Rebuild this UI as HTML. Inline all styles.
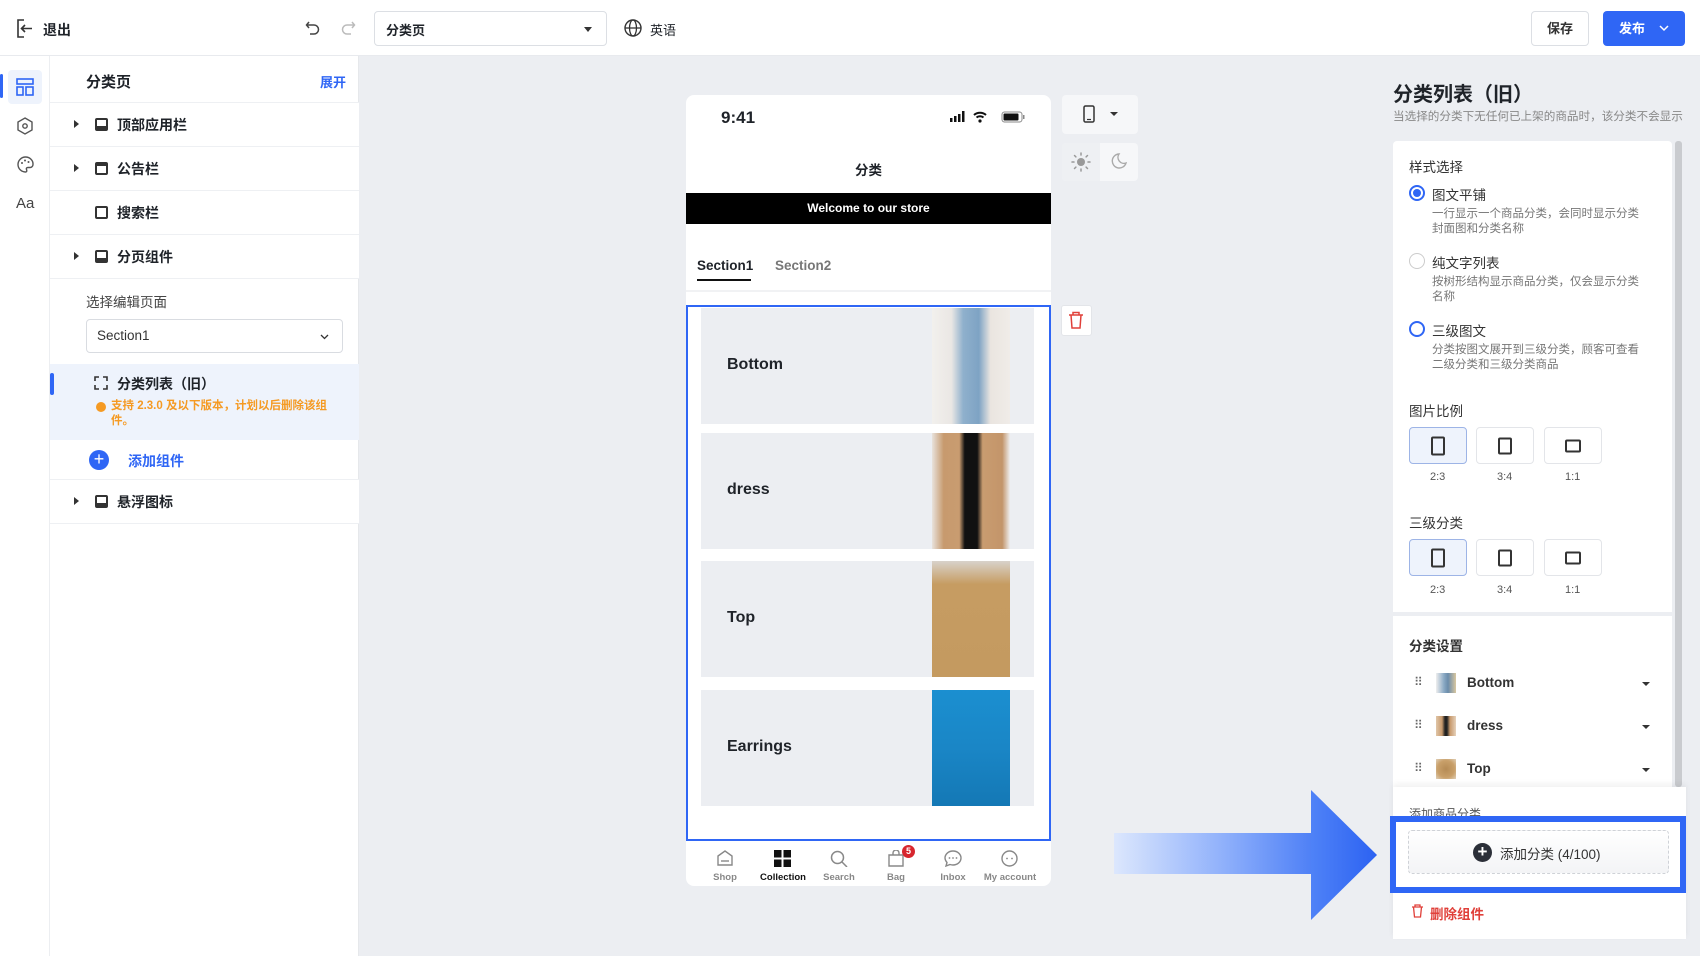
<!DOCTYPE html>
<html><head><meta charset="utf-8"><style>
*{box-sizing:border-box;margin:0;padding:0}
body{width:1700px;height:956px;overflow:hidden;background:#eceef2;font-family:"Liberation Sans","Noto Sans CJK SC",sans-serif;color:#1f2329;position:relative}
.a{position:absolute}
.t{position:absolute;white-space:nowrap}
.row{position:absolute;left:50px;width:309px;height:44px;border-bottom:1px solid #eef0f3;background:#fff}
.row .car{position:absolute;left:24px;top:17px;width:0;height:0;border-top:4px solid transparent;border-bottom:4px solid transparent;border-left:5px solid #333}
.row .ic{position:absolute;left:45px;top:15px;width:13px;height:13px;border:2px solid #333;border-radius:2px}
.row .tx{position:absolute;left:67px;top:12px;font-size:14px;font-weight:bold;color:#1f2329}
.card{position:absolute;left:701px;width:333px;height:116px;background:#eceef2}
.card .n{position:absolute;left:26px;top:48px;font-size:16px;font-weight:bold}
.card .im{position:absolute;left:231px;top:0;width:78px;height:116px}
.rb{position:absolute;width:58px;height:37px;border:1px solid #e3e5e9;border-radius:4px;background:#fff}
.rb.s{background:#eef3fc;border-color:#9db4e6}
.rb i{position:absolute;left:50%;top:50%;border:2px solid #333;border-radius:2px;transform:translate(-50%,-50%)}
.rl{position:absolute;font-size:11px;color:#555}
.desc{position:absolute;left:1432px;font-size:11.5px;color:#777;line-height:15px}
.radio{position:absolute;left:1409px;width:16px;height:16px;border-radius:50%;border:2px solid #2f66f5}
.nav{position:absolute;top:872px;font-size:9.5px;font-weight:bold;color:#888;text-align:center;width:50px}
</style></head><body>
<div class="a" style="left:0;top:0;width:1700px;height:56px;background:#fff;border-bottom:1px solid #e8eaee"></div>
<svg class="a" style="left:16px;top:19px" width="18" height="19" viewBox="0 0 18 19"><path d="M8 1H2v17h6" fill="none" stroke="#333" stroke-width="1.6"/><path d="M16 9.5H6M9 6l-3.5 3.5L9 13" fill="none" stroke="#333" stroke-width="1.6"/></svg>
<div class="t" style="left:43px;top:20px;font-size:14px;font-weight:bold">退出</div>
<svg class="a" style="left:305px;top:20px" width="16" height="16" viewBox="0 0 16 16"><path d="M4 2L1.5 5 4 8M2 5h7a4.5 4.5 0 010 9H5" fill="none" stroke="#444" stroke-width="1.5"/></svg>
<svg class="a" style="left:340px;top:20px" width="16" height="16" viewBox="0 0 16 16"><path d="M12 2l2.5 3L12 8M14 5H7a4.5 4.5 0 000 9h4" fill="none" stroke="#bbb" stroke-width="1.5"/></svg>
<div class="a" style="left:374px;top:11px;width:233px;height:35px;border:1px solid #dcdfe4;border-radius:4px"></div>
<div class="t" style="left:386px;top:20px;font-size:13px;font-weight:bold">分类页</div>
<div class="a" style="left:584px;top:27px;border-left:4px solid transparent;border-right:4px solid transparent;border-top:5px solid #333"></div>
<svg class="a" style="left:624px;top:19px" width="18" height="18" viewBox="0 0 18 18"><circle cx="9" cy="9" r="8" fill="none" stroke="#333" stroke-width="1.4"/><ellipse cx="9" cy="9" rx="3.5" ry="8" fill="none" stroke="#333" stroke-width="1.3"/><path d="M1 9h16" stroke="#333" stroke-width="1.3"/></svg>
<div class="t" style="left:650px;top:20px;font-size:13px">英语</div>
<div class="a" style="left:1531px;top:11px;width:58px;height:35px;border:1px solid #dcdfe4;border-radius:4px;font-size:13px;font-weight:bold;text-align:center;line-height:33px;color:#333">保存</div>
<div class="a" style="left:1603px;top:11px;width:82px;height:35px;background:#2f66f5;border-radius:4px;color:#fff;font-size:13px;font-weight:bold;line-height:35px;padding-left:16px">发布<svg style="position:absolute;left:56px;top:14px" width="10" height="7" viewBox="0 0 10 7"><path d="M1 1l4 4 4-4" fill="none" stroke="#fff" stroke-width="1.5"/></svg></div>

<div class="a" style="left:0;top:56px;width:50px;height:900px;background:#fff;border-right:1px solid #eceef1"></div>
<div class="a" style="left:0;top:74px;width:3px;height:24px;background:#2f66f5;border-radius:2px"></div>
<div class="a" style="left:8px;top:70px;width:34px;height:34px;background:#eef3fc;border-radius:4px"></div>
<svg class="a" style="left:16px;top:78px" width="18" height="18" viewBox="0 0 18 18"><rect x="1" y="1" width="16" height="5" fill="none" stroke="#2f66f5" stroke-width="1.6"/><rect x="1" y="9" width="6" height="8" fill="none" stroke="#2f66f5" stroke-width="1.6"/><rect x="10" y="9" width="7" height="8" fill="none" stroke="#2f66f5" stroke-width="1.6"/></svg>
<svg class="a" style="left:17px;top:117px" width="16" height="18" viewBox="0 0 16 18"><path d="M8 1l7 4v8l-7 4-7-4V5z" fill="none" stroke="#555" stroke-width="1.4"/><circle cx="8" cy="9" r="2.2" fill="none" stroke="#555" stroke-width="1.4"/></svg>
<svg class="a" style="left:17px;top:156px" width="17" height="17" viewBox="0 0 17 17"><path d="M8.5 1a7.5 7.5 0 100 15c1.5 0 1.5-1.5 1-2.5s0-2 1.5-2H13a3 3 0 003-3A7.5 7 0 008.5 1z" fill="none" stroke="#555" stroke-width="1.4"/><circle cx="5" cy="7" r="1" fill="#555"/><circle cx="8" cy="4.5" r="1" fill="#555"/><circle cx="11.5" cy="6" r="1" fill="#555"/></svg>
<div class="t" style="left:16px;top:195px;font-size:15px;color:#444">Aa</div>

<div class="a" style="left:50px;top:56px;width:309px;height:900px;background:#fff;border-right:1px solid #e6e8eb"></div>
<div class="t" style="left:86px;top:71px;font-size:15px;font-weight:bold">分类页</div>
<div class="t" style="left:320px;top:72px;font-size:13px;font-weight:bold;color:#2f66f5">展开</div>
<div class="a" style="left:50px;top:102px;width:309px;height:1px;background:#eef0f3"></div>
<div class="row" style="top:103px"><div class="car"></div><div class="ic" style="border-bottom-width:5px"></div><div class="tx">顶部应用栏</div></div>
<div class="row" style="top:147px"><div class="car"></div><div class="ic" style="border-top-width:4px"></div><div class="tx">公告栏</div></div>
<div class="row" style="top:191px"><div class="ic"></div><div class="tx">搜索栏</div></div>
<div class="row" style="top:235px"><div class="car"></div><div class="ic" style="border-bottom-width:5px"></div><div class="tx">分页组件</div></div>
<div class="t" style="left:86px;top:291px;font-size:13.5px;color:#444">选择编辑页面</div>
<div class="a" style="left:86px;top:319px;width:257px;height:34px;border:1px solid #d9dce1;border-radius:4px"></div>
<div class="t" style="left:97px;top:328px;font-size:13.5px;color:#333">Section1</div>
<svg class="a" style="left:320px;top:334px" width="9" height="6" viewBox="0 0 9 6"><path d="M1 1l3.5 3.5L8 1" fill="none" stroke="#333" stroke-width="1.3"/></svg>
<div class="a" style="left:50px;top:364px;width:309px;height:76px;background:#eef3fc"></div>
<div class="a" style="left:50px;top:373px;width:4px;height:22px;background:#2f66f5;border-radius:2px"></div>
<svg class="a" style="left:94px;top:376px" width="14" height="14" viewBox="0 0 14 14"><path d="M1 5V1h4M9 1h4v4M13 9v4H9M5 13H1V9" fill="none" stroke="#333" stroke-width="1.6"/></svg>
<div class="t" style="left:117px;top:374px;font-size:14px;font-weight:bold">分类列表（旧）</div>
<div class="a" style="left:96px;top:402px;width:10px;height:10px;border-radius:50%;background:#f59a23"></div>
<div class="a" style="left:111px;top:399px;width:230px;font-size:11.5px;font-weight:bold;color:#f59a23;line-height:15px">支持 2.3.0 及以下版本，计划以后删除该组件。</div>
<div class="a" style="left:89px;top:450px;width:20px;height:20px;border-radius:50%;background:#2f66f5;color:#fff;font-size:18px;line-height:19px;text-align:center">+</div>
<div class="t" style="left:128px;top:451px;font-size:14px;font-weight:bold;color:#2f66f5">添加组件</div>
<div class="a" style="left:50px;top:479px;width:309px;height:1px;background:#eef0f3"></div>
<div class="row" style="top:480px"><div class="car"></div><div class="ic" style="border-bottom-width:5px"></div><div class="tx">悬浮图标</div></div>

<div class="a" style="left:686px;top:95px;width:365px;height:791px;background:#fff;border-radius:8px"></div>
<div class="t" style="left:721px;top:108px;font-size:17px;font-weight:bold">9:41</div>
<svg class="a" style="left:950px;top:110px" width="76" height="14" viewBox="0 0 76 14"><rect x="0" y="8" width="2.5" height="4" fill="#111"/><rect x="4" y="6" width="2.5" height="6" fill="#111"/><rect x="8" y="4" width="2.5" height="8" fill="#111"/><rect x="12" y="1" width="2.5" height="11" fill="#111"/><path d="M24 5a9 9 0 0112 0M26.5 7.5a5.5 5.5 0 017 0" fill="none" stroke="#111" stroke-width="2"/><circle cx="30" cy="11" r="1.6" fill="#111"/><rect x="52" y="2" width="20" height="10" rx="2.5" fill="none" stroke="#888" stroke-width="1"/><rect x="53.5" y="3.5" width="15" height="7" rx="1" fill="#111"/><rect x="73" y="5" width="1.5" height="4" fill="#888"/></svg>
<div class="t" style="left:855px;top:159px;font-size:13.5px;font-weight:bold">分类</div>
<div class="a" style="left:686px;top:193px;width:365px;height:31px;background:#000;color:#fff;font-size:12px;font-weight:bold;text-align:center;line-height:31px">Welcome to our store</div>
<div class="t" style="left:697px;top:258px;font-size:13.5px;font-weight:bold">Section1</div>
<div class="a" style="left:697px;top:279px;width:54px;height:2px;background:#111"></div>
<div class="t" style="left:775px;top:258px;font-size:13.5px;font-weight:bold;color:#777">Section2</div>
<div class="a" style="left:686px;top:290px;width:365px;height:2px;background:#f1f2f4"></div>
<div class="card" style="top:308px"><div class="n">Bottom</div><div class="im" style="background:linear-gradient(90deg,#f2f0ed 0%,#eae7e4 25%,#8fb0cc 40%,#7ea3c4 60%,#eae5e0 75%,#f0ece8)"></div></div>
<div class="card" style="top:433px"><div class="n">dress</div><div class="im" style="background:linear-gradient(90deg,#e8e2dc 0%,#c79a6e 15%,#c99c70 35%,#111 42%,#111 58%,#c99c70 65%,#c3956a 90%,#eee 100%)"></div></div>
<div class="card" style="top:561px"><div class="n">Top</div><div class="im" style="background:linear-gradient(180deg,#d8d2cb 0%,#c69c62 20%,#c49a60 100%)"></div></div>
<div class="card" style="top:690px"><div class="n">Earrings</div><div class="im" style="background:linear-gradient(180deg,#1b8fd0,#1a86c6 50%,#1478b5)"></div></div>
<div class="a" style="left:686px;top:305px;width:365px;height:536px;border:2px solid #2f66f5"></div>
<svg class="a" style="left:716px;top:850px" width="18" height="16" viewBox="0 0 18 16"><path d="M2 6l7-5 7 5v9H2z" fill="none" stroke="#888" stroke-width="1.4"/><path d="M5 11h8" stroke="#888" stroke-width="1.4"/></svg>
<svg class="a" style="left:774px;top:850px" width="17" height="17" viewBox="0 0 17 17"><rect x="0" y="0" width="7.5" height="7.5" fill="#111"/><rect x="9.5" y="0" width="7.5" height="7.5" fill="#111"/><rect x="0" y="9.5" width="7.5" height="7.5" fill="#111"/><rect x="9.5" y="9.5" width="7.5" height="7.5" fill="#111"/></svg>
<svg class="a" style="left:830px;top:850px" width="18" height="17" viewBox="0 0 18 17"><circle cx="7.5" cy="7.5" r="6" fill="none" stroke="#888" stroke-width="1.5"/><path d="M12 12l5 5" stroke="#888" stroke-width="1.5"/></svg>
<svg class="a" style="left:888px;top:850px" width="16" height="17" viewBox="0 0 16 17"><path d="M1 5h14v11H1z" fill="none" stroke="#888" stroke-width="1.4"/><path d="M5 5V3a3 3 0 016 0v2" fill="none" stroke="#888" stroke-width="1.4"/></svg>
<div class="a" style="left:902px;top:845px;width:13px;height:13px;border-radius:50%;background:#d7262e;color:#fff;font-size:9px;font-weight:bold;text-align:center;line-height:13px">5</div>
<svg class="a" style="left:944px;top:850px" width="18" height="17" viewBox="0 0 18 17"><path d="M9 1a8 7 0 110 14c-1 0-2-.2-3-.5L2 16l1-3.5A7 7 0 011 8a8 7 0 018-7z" fill="none" stroke="#888" stroke-width="1.4"/><circle cx="5.5" cy="8" r=".9" fill="#888"/><circle cx="9" cy="8" r=".9" fill="#888"/><circle cx="12.5" cy="8" r=".9" fill="#888"/></svg>
<svg class="a" style="left:1001px;top:850px" width="17" height="17" viewBox="0 0 17 17"><circle cx="8.5" cy="8.5" r="7.5" fill="none" stroke="#888" stroke-width="1.4"/><circle cx="6" cy="8.5" r=".9" fill="#888"/><circle cx="11" cy="8.5" r=".9" fill="#888"/></svg>
<div class="nav" style="left:700px">Shop</div>
<div class="nav" style="left:757px;color:#111;width:52px">Collection</div>
<div class="nav" style="left:814px">Search</div>
<div class="nav" style="left:871px">Bag</div>
<div class="nav" style="left:928px">Inbox</div>
<div class="nav" style="left:980px;width:60px">My account</div>

<div class="a" style="left:1062px;top:95px;width:76px;height:39px;background:#f6f7f9;border-radius:4px"></div>
<svg class="a" style="left:1083px;top:105px" width="12" height="18" viewBox="0 0 12 18"><rect x="1" y="1" width="10" height="16" rx="1.5" fill="none" stroke="#333" stroke-width="1.5"/><path d="M4 14.5h4" stroke="#333" stroke-width="1.2"/></svg>
<div class="a" style="left:1110px;top:112px;border-left:4px solid transparent;border-right:4px solid transparent;border-top:4px solid #333"></div>
<div class="a" style="left:1062px;top:143px;width:76px;height:38px;background:#f6f7f9;border-radius:4px"></div>
<div class="a" style="left:1062px;top:143px;width:38px;height:38px;background:#eef0f3;border-radius:4px 0 0 4px"></div>
<svg class="a" style="left:1071px;top:152px" width="20" height="20" viewBox="0 0 20 20"><circle cx="10" cy="10" r="4" fill="#999"/><g stroke="#999" stroke-width="1.5" stroke-linecap="round"><path d="M10 1v2M10 17v2M1 10h2M17 10h2M3.5 3.5l1.4 1.4M15.1 15.1l1.4 1.4M3.5 16.5l1.4-1.4M15.1 4.9l1.4-1.4"/></g></svg>
<svg class="a" style="left:1110px;top:153px" width="17" height="17" viewBox="0 0 17 17"><path d="M9 1a7 7 0 107 9A6 6 0 019 1z" fill="none" stroke="#aaa" stroke-width="1.4"/></svg>
<div class="a" style="left:1061px;top:305px;width:31px;height:31px;background:#fff;border:1px solid #e3e5e9;border-radius:3px"></div>
<svg class="a" style="left:1068px;top:311px" width="16" height="18" viewBox="0 0 16 18"><path d="M1 4h14M5 4V1.5h6V4M3 4l1 13h8l1-13" fill="none" stroke="#e0403a" stroke-width="1.5"/></svg>

<div class="a" style="left:1114px;top:833px;width:200px;height:41px;background:linear-gradient(90deg,#dce7fd,#8fb0fb 55%,#4d7ff6)"></div>
<svg class="a" style="left:1311px;top:790px" width="68" height="130" viewBox="0 0 68 130"><defs><linearGradient id="g" x1="0" x2="1"><stop offset="0" stop-color="#4f82f7"/><stop offset="1" stop-color="#2c62f2"/></linearGradient></defs><path d="M0 0L66 65 0 130z" fill="url(#g)"/></svg>

<div class="t" style="left:1393px;top:78px;font-size:20px;font-weight:bold">分类列表（旧）</div>
<div class="t" style="left:1393px;top:108px;font-size:11.6px;color:#888">当选择的分类下无任何已上架的商品时，该分类不会显示</div>
<div class="a" style="left:1393px;top:141px;width:279px;height:471px;background:#fff;border-radius:4px 4px 0 0"></div>
<div class="a" style="left:1675px;top:141px;width:7px;height:646px;background:#c9cbcf;border-radius:3px"></div>
<div class="t" style="left:1409px;top:156px;font-size:13.5px;color:#333">样式选择</div>
<div class="radio" style="top:185px;border-width:2px"><div style="position:absolute;left:2px;top:2px;width:8px;height:8px;border-radius:50%;background:#2f66f5"></div></div>
<div class="t" style="left:1432px;top:184px;font-size:13.5px;color:#333">图文平铺</div>
<div class="desc" style="top:207px">一行显示一个商品分类，会同时显示分类<br>封面图和分类名称</div>
<div class="radio" style="top:253px;border:1px solid #ccc"></div>
<div class="t" style="left:1432px;top:252px;font-size:13.5px;color:#333">纯文字列表</div>
<div class="desc" style="top:275px">按树形结构显示商品分类，仅会显示分类<br>名称</div>
<div class="radio" style="top:321px"></div>
<div class="t" style="left:1432px;top:320px;font-size:13.5px;color:#333">三级图文</div>
<div class="desc" style="top:343px">分类按图文展开到三级分类，顾客可查看<br>二级分类和三级分类商品</div>
<div class="t" style="left:1409px;top:400px;font-size:13.5px;color:#333">图片比例</div>
<div class="rb s" style="left:1409px;top:427px"><i style="width:14px;height:19px"></i></div>
<div class="rb" style="left:1476px;top:427px"><i style="width:14px;height:17px"></i></div>
<div class="rb" style="left:1544px;top:427px"><i style="width:16px;height:13px"></i></div>
<div class="rl" style="left:1430px;top:471px">2:3</div><div class="rl" style="left:1497px;top:471px">3:4</div><div class="rl" style="left:1565px;top:471px">1:1</div>
<div class="t" style="left:1409px;top:512px;font-size:13.5px;color:#333">三级分类</div>
<div class="rb s" style="left:1409px;top:539px"><i style="width:14px;height:19px"></i></div>
<div class="rb" style="left:1476px;top:539px"><i style="width:14px;height:17px"></i></div>
<div class="rb" style="left:1544px;top:539px"><i style="width:16px;height:13px"></i></div>
<div class="rl" style="left:1430px;top:584px">2:3</div><div class="rl" style="left:1497px;top:584px">3:4</div><div class="rl" style="left:1565px;top:584px">1:1</div>
<div class="a" style="left:1393px;top:616px;width:279px;height:172px;background:#fff"></div>
<div class="t" style="left:1409px;top:635px;font-size:13.5px;font-weight:bold;color:#333">分类设置</div>
<div class="t" style="left:1414px;top:675px;font-size:12px;color:#666;letter-spacing:-1px">⠿</div>
<div class="a" style="left:1436px;top:673px;width:20px;height:20px;background:linear-gradient(90deg,#eee,#8aa9c4 40%,#6b8cab 60%,#d9c7a0)"></div>
<div class="t" style="left:1467px;top:675px;font-size:13.5px;font-weight:bold;color:#333">Bottom</div>
<div class="a" style="left:1642px;top:682px;border-left:4px solid transparent;border-right:4px solid transparent;border-top:4px solid #333"></div>
<div class="t" style="left:1414px;top:718px;font-size:12px;color:#666;letter-spacing:-1px">⠿</div>
<div class="a" style="left:1436px;top:716px;width:20px;height:20px;background:linear-gradient(90deg,#e0c6a8,#c7996c 30%,#222 45%,#222 55%,#c7996c 70%,#e6d2bc)"></div>
<div class="t" style="left:1467px;top:718px;font-size:13.5px;font-weight:bold;color:#333">dress</div>
<div class="a" style="left:1642px;top:725px;border-left:4px solid transparent;border-right:4px solid transparent;border-top:4px solid #333"></div>
<div class="t" style="left:1414px;top:761px;font-size:12px;color:#666;letter-spacing:-1px">⠿</div>
<div class="a" style="left:1436px;top:759px;width:20px;height:20px;background:radial-gradient(circle,#b58b55,#c9a06a 60%,#e0d0b8)"></div>
<div class="t" style="left:1467px;top:761px;font-size:13.5px;font-weight:bold;color:#333">Top</div>
<div class="a" style="left:1642px;top:768px;border-left:4px solid transparent;border-right:4px solid transparent;border-top:4px solid #333"></div>
<div class="a" style="left:1393px;top:787px;width:293px;height:152px;background:#fff;box-shadow:0 -3px 6px rgba(0,0,0,.06)"></div>
<div class="t" style="left:1409px;top:805px;font-size:12px;color:#555">添加商品分类</div>
<div class="a" style="left:1408px;top:830px;width:261px;height:44px;border:1px dashed #cfd2d7;border-radius:4px;background:linear-gradient(180deg,#fff,#f3f4f6)"></div>
<div class="a" style="left:1473px;top:843px;width:19px;height:19px;border-radius:50%;background:#2b2f38;color:#fff;font-size:17px;line-height:18px;text-align:center;font-weight:bold">+</div>
<div class="t" style="left:1500px;top:843px;font-size:13.5px;color:#333">添加分类 (4/100)</div>
<div class="a" style="left:1390px;top:816px;width:296px;height:77px;border:6px solid #2f66f5"></div>
<svg class="a" style="left:1411px;top:904px" width="13" height="14" viewBox="0 0 13 14"><path d="M1 3h11M4 3V1h5v2M2.5 3l1 10h6l1-10" fill="none" stroke="#e0403a" stroke-width="1.3"/></svg>
<div class="t" style="left:1430px;top:903px;font-size:13.5px;font-weight:bold;color:#e0403a">删除组件</div>
</body></html>
